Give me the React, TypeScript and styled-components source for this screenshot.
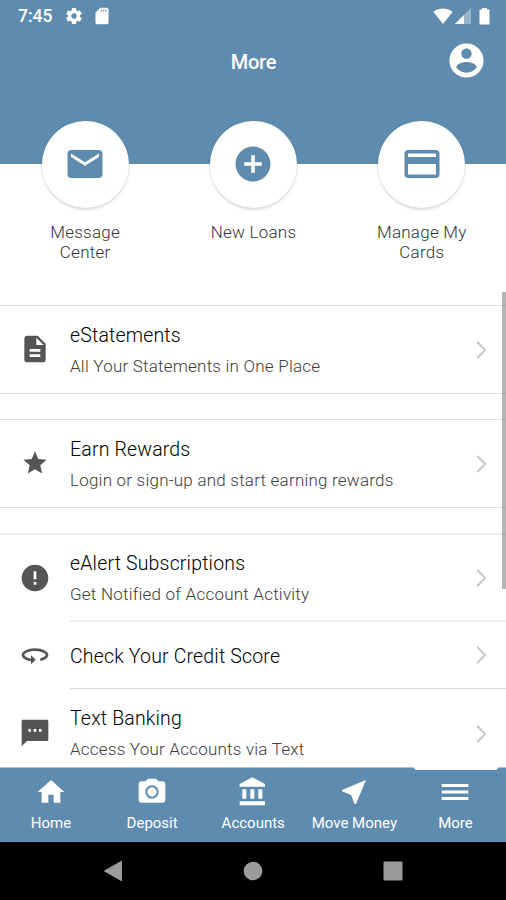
import React from "react";
import styled, { createGlobalStyle } from "styled-components";

const BLUE = "#5f8bae";

const GlobalStyle = createGlobalStyle`
  * { box-sizing: border-box; }
  body { margin: 0; background: #fff; }
`;

const Screen = styled.div`
  width: 506px;
  height: 900px;
  display: flex;
  flex-direction: column;
  overflow: hidden;
  position: relative;
  background: #fff;
  font-family: Roboto, "Liberation Sans", sans-serif;
`;

const Header = styled.header`
  flex: none;
  height: 163.5px;
  background: ${BLUE};
  color: #fff;
`;

const StatusBar = styled.div`
  height: 32px;
  padding: 0 8px 0 18px;
  display: flex;
  align-items: center;
  justify-content: space-between;
`;

const StatusGroup = styled.div<{ $gap: number }>`
  display: flex;
  align-items: center;
  gap: ${(p) => p.$gap}px;
`;

const Clock = styled.span`
  font-size: 17.5px;
  font-weight: 500;
  line-height: 32px;
  width: 36px;
  margin-right: 1px;
  white-space: nowrap;
`;

const TitleBar = styled.div`
  height: 58px;
  padding: 0 20px;
  display: grid;
  grid-template-columns: 40px 1fr 40px;
  align-items: center;
`;

const Title = styled.h1`
  grid-column: 2;
  margin: 0;
  text-align: center;
  font-size: 20px;
  font-weight: 500;
  letter-spacing: -0.2px;
  padding: 1px 0 0 1px;
`;

const Profile = styled.div`
  display: flex;
  justify-content: center;
  padding-bottom: 1px;
`;

const QuickActions = styled.section`
  flex: none;
  display: grid;
  grid-template-columns: repeat(3, 1fr);
  height: 184px;
  margin-top: -42.5px;
  padding-left: 1px;
`;

const QuickAction = styled.div`
  display: flex;
  flex-direction: column;
  align-items: center;
`;

const Disc = styled.div`
  width: 87px;
  height: 87px;
  border-radius: 50%;
  background: #fff;
  color: ${BLUE};
  display: flex;
  align-items: center;
  justify-content: center;
  padding-bottom: 2px;
  box-shadow: 0 1.5px 3px rgba(0, 0, 0, 0.18);
`;

const QuickLabel = styled.span`
  width: 110px;
  margin-top: 13.5px;
  text-align: center;
  font-size: 17px;
  font-weight: 300;
  line-height: 20.3px;
  letter-spacing: 0.25px;
  color: #333;
`;

const List = styled.main`
  flex: 1;
  min-height: 0;
  overflow: hidden;
  display: flex;
  flex-direction: column;
`;

const Group = styled.section<{ $edge: string }>`
  flex: none;
  border-top: ${(p) => p.$edge};
  border-bottom: 1px solid #dedede;
  margin-bottom: 25px;
`;

const Row = styled.div<{ $height: number }>`
  height: ${(p) => p.$height}px;
  display: grid;
  grid-template-columns: 70px 1fr;
`;

const RowIcon = styled.div<{ $lift: number }>`
  display: flex;
  align-items: center;
  justify-content: center;
  padding-bottom: ${(p) => p.$lift * 2}px;
  color: #555;
`;

const RowBody = styled.div<{ $line: string }>`
  display: flex;
  align-items: center;
  justify-content: space-between;
  padding-right: 19px;
  border-bottom: ${(p) => p.$line};
`;

const RowText = styled.div<{ $drop: number }>`
  padding-top: ${(p) => p.$drop * 2}px;
`;

const RowTitle = styled.div`
  font-size: 19.5px;
  font-weight: 300;
  line-height: 31px;
  letter-spacing: 0.17px;
  color: #000;
  white-space: nowrap;
`;

const RowDetail = styled.div`
  font-size: 17px;
  font-weight: 300;
  line-height: 30px;
  letter-spacing: 0.22px;
  color: #3c3c3c;
  white-space: nowrap;
`;

const ScrollThumb = styled.div`
  position: absolute;
  right: 0;
  top: 292px;
  width: 4px;
  height: 297px;
  background: rgba(100, 100, 100, 0.48);
`;

const TabBar = styled.nav`
  flex: none;
  height: 75px;
  background: ${BLUE};
  border-top: 1px solid #b3c1cd;
  display: grid;
  grid-template-columns: repeat(5, 1fr);
  padding-left: 0.5px;
  color: #fff;
`;

const Tab = styled.div`
  position: relative;
  display: flex;
  flex-direction: column;
  align-items: center;
  padding-top: 8px;
`;

const TabLabel = styled.span`
  margin-top: 5px;
  font-size: 15px;
  font-weight: 400;
  line-height: 20px;
  letter-spacing: 0;
  white-space: nowrap;
`;

const ActiveMark = styled.span`
  position: absolute;
  top: -1px;
  left: 9px;
  width: 84px;
  height: 3px;
  background: #fff;
  border-radius: 0 0 3px 3px;
`;

const SystemBar = styled.footer`
  flex: none;
  height: 58px;
  background: #000;
  color: #9b9b9b;
  display: flex;
  justify-content: center;
  align-items: center;
  gap: 120px;
`;

const paths = {
  settings:
    "M19.14 12.94c.04-.3.06-.61.06-.94 0-.32-.02-.64-.07-.94l2.03-1.58c.18-.14.23-.41.12-.61l-1.92-3.32c-.12-.22-.37-.29-.59-.22l-2.39.96c-.5-.38-1.03-.7-1.62-.94l-.36-2.54c-.04-.24-.24-.41-.48-.41h-3.84c-.24 0-.43.17-.47.41l-.36 2.54c-.59.24-1.13.57-1.62.94l-2.39-.96c-.22-.08-.47 0-.59.22L2.74 8.87c-.12.21-.08.47.12.61l2.03 1.58c-.05.3-.09.63-.09.94s.02.64.07.94l-2.03 1.58c-.18.14-.23.41-.12.61l1.92 3.32c.12.22.37.29.59.22l2.39-.96c.5.38 1.03.7 1.62.94l.36 2.54c.05.24.24.41.48.41h3.84c.24 0 .44-.17.47-.41l.36-2.54c.59-.24 1.13-.56 1.62-.94l2.39.96c.22.08.47 0 .59-.22l1.92-3.32c.12-.22.07-.47-.12-.61l-2.01-1.58zM12 15.2A3.2 3.2 0 1 1 12 8.8a3.2 3.2 0 0 1 0 6.4z",
  sdCard:
    "M18 2h-8L4.02 8 4 20c0 1.1.9 2 2 2h12c1.1 0 2-.9 2-2V4c0-1.1-.9-2-2-2zm-6 4.5h-1.5v-2H12v2zm2.7 0h-1.5v-2h1.5v2zm2.8 0H16v-2h1.5v2z",
  account:
    "M12 2C6.48 2 2 6.48 2 12s4.48 10 10 10 10-4.48 10-10S17.52 2 12 2zm0 3c1.66 0 3 1.34 3 3s-1.34 3-3 3-3-1.34-3-3 1.34-3 3-3zm0 14.2c-2.5 0-4.71-1.28-6-3.22.03-1.99 4-3.08 6-3.08 1.99 0 5.97 1.09 6 3.08-1.29 1.94-3.5 3.22-6 3.22z",
  mail: "M20 4H4c-1.1 0-1.99.9-1.99 2L2 18c0 1.1.9 2 2 2h16c1.1 0 2-.9 2-2V6c0-1.1-.9-2-2-2zm0 4l-8 5-8-5V6l8 5 8-5v2z",
  add: "M12 2C6.48 2 2 6.48 2 12s4.48 10 10 10 10-4.48 10-10S17.52 2 12 2zm5 11h-4v4h-2v-4H7v-2h4V7h2v4h4v2z",
  card: "M20 4H4c-1.11 0-1.99.89-1.99 2L2 18c0 1.11.89 2 2 2h16c1.11 0 2-.89 2-2V6c0-1.11-.89-2-2-2zm0 14H4v-6h16v6zm0-10H4V6h16v2z",
  document:
    "M14 2H6c-1.1 0-1.99.9-1.99 2L4 20c0 1.1.89 2 1.99 2H18c1.1 0 2-.9 2-2V8l-6-6zm2 16H8v-2h8v2zm0-4H8v-2h8v2zm-3-5V3.5L18.5 9H13z",
  star: "M12 17.27L18.18 21l-1.64-7.03L22 9.24l-7.19-.61L12 2 9.19 8.63 2 9.24l5.46 4.73L5.82 21z",
  alert:
    "M12 2C6.48 2 2 6.48 2 12s4.48 10 10 10 10-4.48 10-10S17.52 2 12 2zm1 15h-2v-2h2v2zm0-4h-2V7h2v6z",
  rotate:
    "M12 7C6.48 7 2 9.24 2 12c0 2.24 2.94 4.13 7 4.77V18.9l3.6-3.4-3.6-3.4v2.63c-3.15-.56-5-1.9-5-2.73 0-1.06 3.04-3 8-3s8 1.94 8 3c0 .73-1.46 1.89-4 2.53v2.05c3.53-.77 6-2.53 6-4.58 0-2.76-4.48-5-10-5z",
  sms: "M20.8 2H3.2C2.5 2 2 2.5 2 3.200L2 22l4-4h14.800c.7 0 1.200-.5 1.200-1.200V3.200c0-.7-.5-1.200-1.200-1.200zM9 11H7V9h2v2zm4 0h-2V9h2v2zm4 0h-2V9h2v2z",
  home: "M10 20v-6h4v6h5v-8h3L12 3 2 12h3v8z",
  camera:
    "M9 2L7.17 4H4c-1.1 0-2 .9-2 2v12c0 1.1.9 2 2 2h16c1.1 0 2-.9 2-2V6c0-1.1-.9-2-2-2h-3.17L15 2H9zm3 15c-2.76 0-5-2.24-5-5s2.24-5 5-5 5 2.24 5 5-2.24 5-5 5zM12 8.5a3.5 3.5 0 1 0 0 7 3.5 3.5 0 0 0 0-7z",
  bank: "M4 10v7h3v-7H4zm6 0v7h3v-7h-3zM2 22h19v-3H2v3zm14-12v7h3v-7h-3zm-4.5-9L2 6v2h19V6l-9.5-5z",
  send: "M21 3L3 10.53v.98l6.84 2.65L12.48 21h.98L21 3z",
  menu: "M2 18h20v-2.2H2V18zm0-4.900h20v-2.200H2v2.200zM2 6v2.200h20V6H2z",
  wifi: "M12 21.5 23.64 7c-.45-.34-4.93-4-11.64-4C5.28 3 .81 6.66.36 7L12 21.5z",
} as const;

type IconName = keyof typeof paths;

const Glyph = styled.svg`
  display: block;
  flex: none;
  fill: currentColor;
`;

function Icon({ name, size, viewBox = "0 0 24 24" }: { name: IconName; size: number; viewBox?: string }) {
  return (
    <Glyph width={size} height={size} viewBox={viewBox}>
      <path d={paths[name]} />
    </Glyph>
  );
}

const Chevron = () => (
  <svg width="11" height="18" viewBox="0 0 11 18" fill="none" stroke="#c4c4c4" strokeWidth="1.8">
    <path d="M1.2 1l8 8-8 8" />
  </svg>
);

type Item = {
  icon: IconName;
  title: string;
  detail?: string;
  height: number;
  line?: string;
  iconSize?: number;
  lift?: number;
  drop?: number;
};

const groups: { edge: string; items: Item[] }[] = [
  {
    edge: "1px solid #dedede",
    items: [
      {
        icon: "document",
        title: "eStatements",
        detail: "All Your Statements in One Place",
        height: 87,
        lift: 0.5,
        drop: 0.9,
      },
    ],
  },
  {
    edge: "1px solid #dedede",
    items: [
      {
        icon: "star",
        title: "Earn Rewards",
        detail: "Login or sign-up and start earning rewards",
        height: 87,
        iconSize: 28,
        lift: 0.5,
        drop: 0.9,
      },
    ],
  },
  {
    edge: "2px solid #eeeeee",
    items: [
      {
        icon: "alert",
        title: "eAlert Subscriptions",
        detail: "Get Notified of Account Activity",
        height: 87,
        line: "2px solid #eeeeee",
        lift: 0.5,
        drop: 0.5,
      },
      { icon: "rotate", title: "Check Your Credit Score", height: 67, line: "1px solid #dadada", lift: 0.5, drop: 1.5 },
      { icon: "sms", title: "Text Banking", detail: "Access Your Accounts via Text", height: 89, lift: 1, drop: 0 },
    ],
  },
];

const actions: { icon: IconName; label: string }[] = [
  { icon: "mail", label: "Message Center" },
  { icon: "add", label: "New Loans" },
  { icon: "card", label: "Manage My Cards" },
];

const tabs: { icon: IconName; label: string; active?: boolean }[] = [
  { icon: "home", label: "Home" },
  { icon: "camera", label: "Deposit" },
  { icon: "bank", label: "Accounts" },
  { icon: "send", label: "Move Money" },
  { icon: "menu", label: "More", active: true },
];

export default function App() {
  return (
    <Screen>
      <GlobalStyle />
      <Header>
        <StatusBar>
          <StatusGroup $gap={9}>
            <Clock>7:45</Clock>
            <Icon name="settings" size={20} />
            <Icon name="sdCard" size={18} viewBox="1 1 22 22" />
          </StatusGroup>
          <StatusGroup $gap={2}>
            <Icon name="wifi" size={20} />
            <svg width="16" height="16" viewBox="0 0 16 16">
              <path d="M16 0v16H0z" fill="#fff" opacity="0.35" />
              <path d="M9 7v9H0z" fill="#fff" />
            </svg>
            <svg width="25" height="18" viewBox="0 0 25 18">
              <path d="M6.5 2.5H9V1h5v1.5h2.500v15h-10z" fill="#fff" />
            </svg>
          </StatusGroup>
        </StatusBar>
        <TitleBar>
          <Title>More</Title>
          <Profile>
            <Icon name="account" size={41} />
          </Profile>
        </TitleBar>
      </Header>
      <QuickActions>
        {actions.map((a) => (
          <QuickAction key={a.label}>
            <Disc>
              <Icon name={a.icon} size={42} />
            </Disc>
            <QuickLabel>{a.label}</QuickLabel>
          </QuickAction>
        ))}
      </QuickActions>
      <List>
        {groups.map((g, i) => (
          <Group key={i} $edge={g.edge}>
            {g.items.map((item) => (
              <Row key={item.title} $height={item.height}>
                <RowIcon $lift={item.lift ?? 0}>
                  <Icon name={item.icon} size={item.iconSize ?? 32} />
                </RowIcon>
                <RowBody $line={item.line ?? "none"}>
                  <RowText $drop={item.drop ?? 0}>
                    <RowTitle>{item.title}</RowTitle>
                    {item.detail && <RowDetail>{item.detail}</RowDetail>}
                  </RowText>
                  <Chevron />
                </RowBody>
              </Row>
            ))}
          </Group>
        ))}
      </List>
      <ScrollThumb />
      <TabBar>
        {tabs.map((t) => (
          <Tab key={t.label}>
            {t.active && <ActiveMark />}
            <Icon name={t.icon} size={32} />
            <TabLabel>{t.label}</TabLabel>
          </Tab>
        ))}
      </TabBar>
      <SystemBar>
        <svg width="20" height="22" viewBox="0 0 20 22" fill="currentColor">
          <path d="M19 0.5v21L0.5 11z" />
        </svg>
        <svg width="20" height="20" viewBox="0 0 20 20" fill="currentColor">
          <circle cx="10" cy="10" r="9.3" />
        </svg>
        <svg width="20" height="20" viewBox="0 0 20 20" fill="currentColor">
          <rect x="0.5" y="0.5" width="19" height="19" rx="1" />
        </svg>
      </SystemBar>
    </Screen>
  );
}
